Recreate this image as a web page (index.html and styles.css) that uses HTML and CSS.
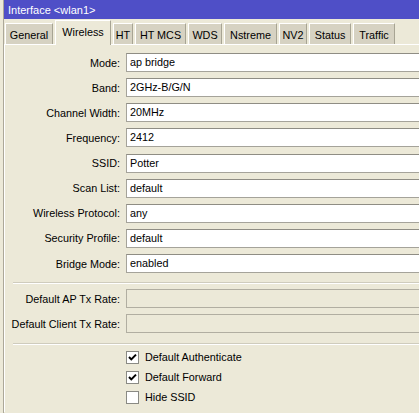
FILE: index.html
```html
<!DOCTYPE html>
<html>
<head>
<meta charset="utf-8">
<link rel="stylesheet" href="styles.css">
</head>
<body>
<div class="window">
  <div class="titlebar">Interface &lt;wlan1&gt;</div>
  <div class="tabs">
    <div class="tab t-general">General</div>
    <div class="tab t-wireless selected">Wireless</div>
    <div class="tab t-ht">HT</div>
    <div class="tab t-htmcs">HT MCS</div>
    <div class="tab t-wds">WDS</div>
    <div class="tab t-nstreme">Nstreme</div>
    <div class="tab t-nv2">NV2</div>
    <div class="tab t-status">Status</div>
    <div class="tab t-traffic">Traffic</div>
  </div>
  <div class="content">
    <div class="form first">
      <label class="lbl">Mode:</label><div class="field">ap bridge</div>
      <label class="lbl">Band:</label><div class="field">2GHz-B/G/N</div>
      <label class="lbl">Channel Width:</label><div class="field">20MHz</div>
      <label class="lbl">Frequency:</label><div class="field">2412</div>
      <label class="lbl">SSID:</label><div class="field">Potter</div>
      <label class="lbl">Scan List:</label><div class="field">default</div>
      <label class="lbl">Wireless Protocol:</label><div class="field">any</div>
      <label class="lbl">Security Profile:</label><div class="field">default</div>
      <label class="lbl">Bridge Mode:</label><div class="field">enabled</div>
    </div>
    <div class="sep sep1"></div>
    <div class="form second">
      <label class="lbl">Default AP Tx Rate:</label><div class="field disabled"></div>
      <label class="lbl">Default Client Tx Rate:</label><div class="field disabled"></div>
    </div>
    <div class="sep sep2"></div>
    <div class="checks">
      <div class="check"><span class="box"><svg viewBox="0 0 11 11" width="11" height="11"><path d="M2 5 L4.3 7.4 L9 2.6" fill="none" stroke="#000" stroke-width="2"/></svg></span><span>Default Authenticate</span></div>
      <div class="check"><span class="box"><svg viewBox="0 0 11 11" width="11" height="11"><path d="M2 5 L4.3 7.4 L9 2.6" fill="none" stroke="#000" stroke-width="2"/></svg></span><span>Default Forward</span></div>
      <div class="check"><span class="box"></span><span>Hide SSID</span></div>
    </div>
  </div>
</div>
</body>
</html>
```

FILE: styles.css
```css
html, body {
  margin: 0;
  padding: 0;
  width: 419px;
  height: 413px;
  overflow: hidden;
  background: #ece9d8;
  font-family: "Liberation Sans", Arial, sans-serif;
  font-size: 10.8px;
  color: #000;
}

.window {
  margin-left: 3px;
  border-left: 1px solid #aca899;
  height: 413px;
  box-sizing: border-box;
}

.titlebar {
  height: 19px;
  line-height: 20px;
  background: #4f4fc7;
  color: #fff;
  padding-left: 4px;
  font-size: 11px;
  white-space: nowrap;
}

.tabs {
  display: flex;
  align-items: flex-end;
  gap: 2px;
  height: 25px;
  padding-left: 1px;
  box-sizing: border-box;
}

.tab {
  height: 21px;
  box-sizing: border-box;
  background: #d6d2c2;
  border-top: 1px solid #fff;
  border-left: 1px solid #fff;
  border-right: 1px solid #a7a493;
  display: flex;
  align-items: center;
  justify-content: center;
  white-space: nowrap;
  padding-top: 1px;
}

.tab.selected {
  height: 25px;
  background: #ece9d8;
  margin-bottom: -1px;
  position: relative;
  padding-bottom: 3px;
}

.t-general { width: 48px; }
.t-wireless { width: 56px; }
.t-ht { width: 20px; }
.t-htmcs { width: 51px; }
.t-wds { width: 34px; }
.t-nstreme { width: 53px; }
.t-nv2 { width: 28px; }
.t-status { width: 42px; }
.t-traffic { width: 42px; }

.content {
  border-top: 1px solid #fff;
  border-left: 1px solid #fff;
  height: 368px;
  box-sizing: border-box;
}

.form {
  display: grid;
  grid-template-columns: 115px 1fr;
  column-gap: 6px;
  grid-auto-rows: 25.125px;
  align-items: center;
}

.form.first { padding-top: 5px; }
.form.second { padding-top: 2px; }

.lbl {
  text-align: right;
  white-space: nowrap;
}

.field {
  height: 19px;
  box-sizing: border-box;
  background: #fff;
  border: 1px solid #a5a39a;
  border-top-color: #8f8d84;
  border-right: none;
  padding-left: 3px;
  line-height: 17px;
  white-space: nowrap;
}

.field.disabled {
  background: #ece9d8;
  border-color: #b1aea1;
}

.sep {
  margin-left: 8px;
  height: 1px;
  background: #cfccbd;
  border-bottom: 1px solid #fff;
}

.sep1 { margin-top: 6px; }
.sep2 { margin-top: 6.75px; }

.checks {
  padding-top: 2px;
  padding-left: 121px;
}

.check {
  height: 20px;
  display: flex;
  align-items: center;
  gap: 6px;
}

.box {
  width: 13px;
  height: 13px;
  box-sizing: border-box;
  border: 1px solid #8a8a84;
  background: #fff;
  display: flex;
  align-items: center;
  justify-content: center;
}

.box svg { display: block; }
```
